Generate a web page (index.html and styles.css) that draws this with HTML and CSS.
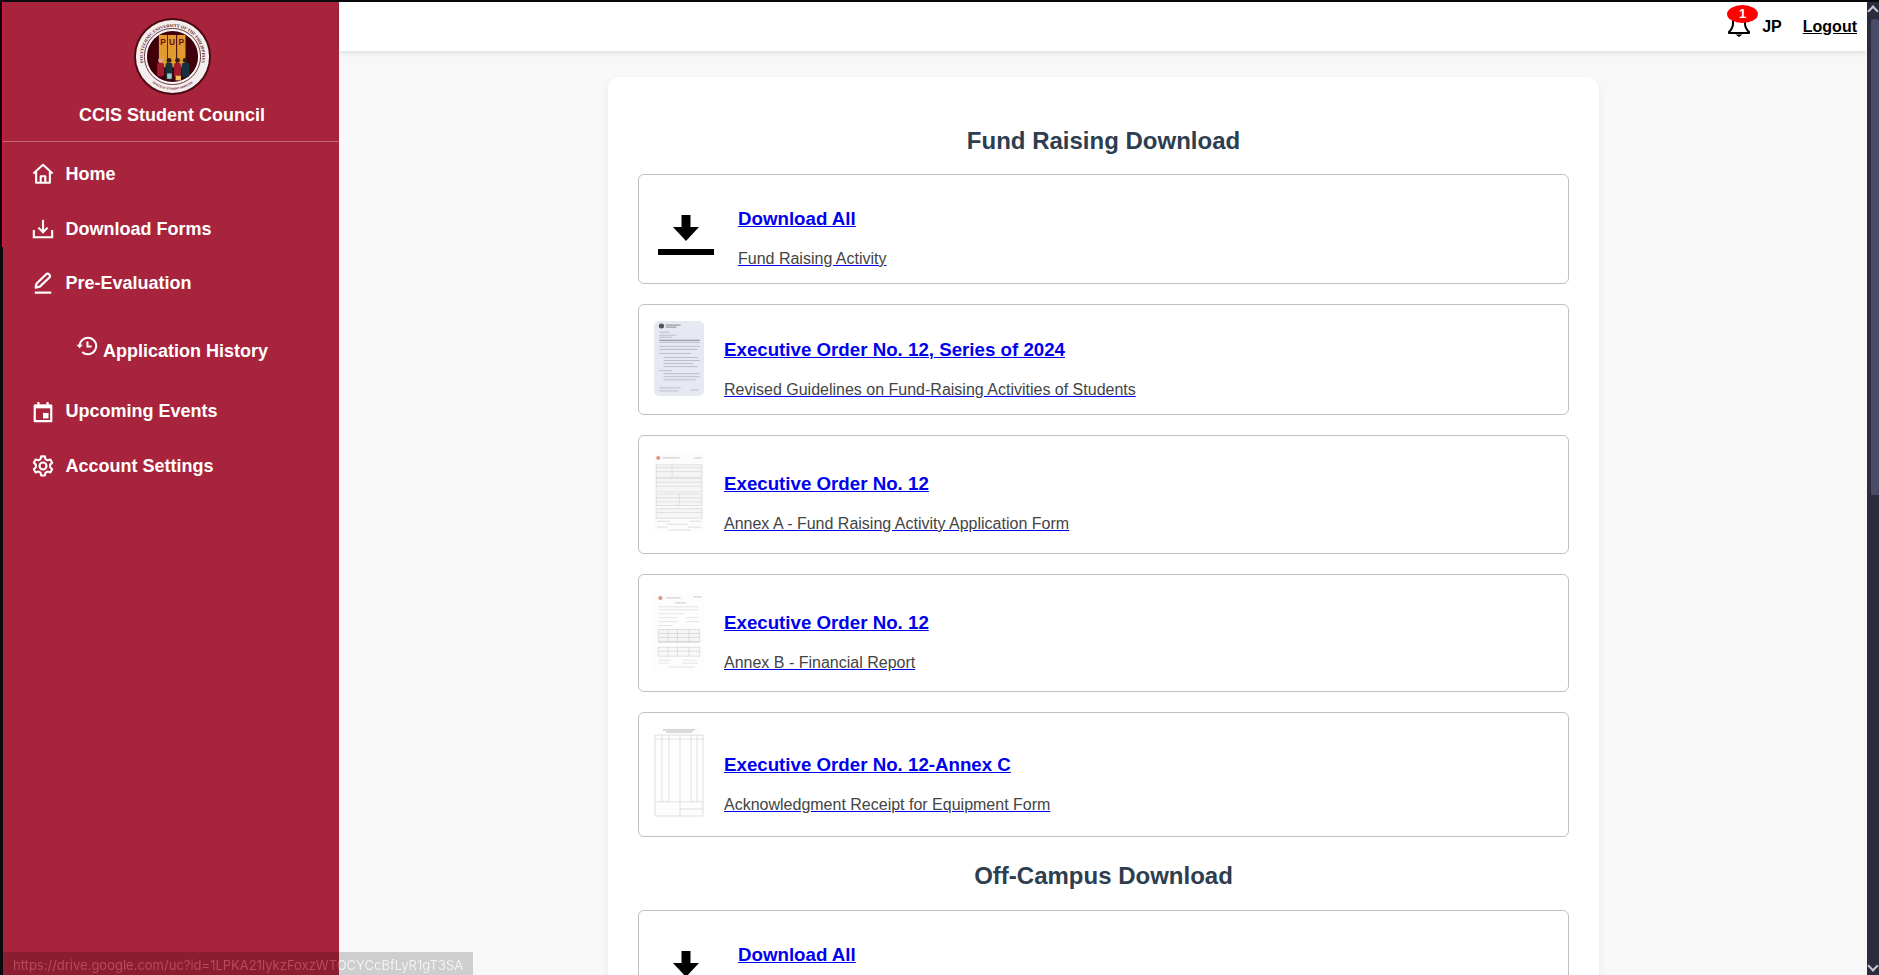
FILE: index.html
```html
<!DOCTYPE html>
<html lang="en">

<head>
    <meta charset="UTF-8">
    <meta name="viewport" content="width=device-width, initial-scale=1.0">
    <title>CCIS Student Council - Downloads</title>
    <link rel="stylesheet" href="styles.css">
</head>

<body>
    <div class="top-edge"></div>
    <div class="app">
        <div class="left-edge"></div>

        <aside class="sidebar">
            <div class="brand">
                <svg class="logo" viewBox="0 0 100 100">
                    <defs>
                        <path id="ringTop" d="M18.400 72 A38.500 38.500 0 1 1 81.600 72"></path>
                        <path id="ringBottom" d="M21.200 82 A43 43 0 0 0 78.800 82"></path>
                    </defs>
                    <circle cx="50" cy="50" r="50" fill="#4d0712"></circle>
                    <circle cx="50" cy="50" r="47.500" fill="#f4efee"></circle>
                    <circle cx="50" cy="50" r="34" fill="#3f000c" stroke="#fff" stroke-width="1.500"></circle>
                    <circle cx="50" cy="50" r="36.500" fill="none" stroke="#4d0712" stroke-width="1"></circle>
                    <text class="logo-ring"><textPath href="#ringTop" startOffset="50%" text-anchor="middle">POLYTECHNIC UNIVERSITY OF THE PHILIPPINES</textPath></text>
                    <text class="logo-ring-small"><textPath href="#ringBottom" startOffset="50%" text-anchor="middle">OFFICE OF STUDENT SERVICES</textPath></text>
                    <rect x="32.300" y="22" width="10.700" height="42" fill="#e09a30"></rect>
                    <rect x="44" y="22" width="10.700" height="42" fill="#e09a30"></rect>
                    <rect x="56" y="22" width="10.900" height="42" fill="#e09a30"></rect>
                    <text class="logo-pup" x="37.600" y="35">P</text>
                    <text class="logo-pup" x="49.400" y="35">U</text>
                    <text class="logo-pup" x="61.400" y="35">P</text>
                    <g>
                        <rect x="30" y="58" width="9" height="18" rx="3" fill="#a01c2c"></rect>
                        <circle cx="34.500" cy="55" r="3.200" fill="#d7a486"></circle>
                        <rect x="41" y="58" width="9" height="22" rx="3" fill="#16323c"></rect>
                        <circle cx="45.500" cy="55" r="3.200" fill="#2b1b16"></circle>
                        <rect x="52" y="58" width="9" height="19" rx="3" fill="#a01c2c"></rect>
                        <circle cx="56.500" cy="55" r="3.200" fill="#3a2018"></circle>
                        <rect x="62" y="58" width="10" height="19" rx="3" fill="#15303f"></rect>
                        <circle cx="66.500" cy="55" r="3.200" fill="#2b1b16"></circle>
                        <rect x="43" y="72" width="6" height="7" fill="#9fc5c9"></rect>
                        <rect x="54" y="75" width="7" height="6" fill="#f0c060"></rect>
                    </g>
                </svg>
                <div class="brand-name">CCIS Student Council</div>
            </div>

            <nav class="menu">
                <a class="menu-item" href="#">
                    <svg class="menu-icon" viewBox="0 0 24 24" fill="none" stroke="#fff" stroke-width="2.300" stroke-linejoin="round">
                        <path d="M1.500 11.500 12 2l10.500 9.500"></path>
                        <path d="M4.500 9.500V21.500h15V9.500"></path>
                        <path d="M9.500 21.500v-7h5v7"></path>
                    </svg>
                    Home
                </a>
                <a class="menu-item item-forms" href="#">
                    <svg class="menu-icon" viewBox="0 0 24 24" fill="none" stroke="#fff" stroke-width="2.300">
                        <path d="M12 2v13"></path>
                        <path d="M7 10.500l5 5 5-5"></path>
                        <path d="M2 13v8h20v-8"></path>
                    </svg>
                    Download Forms
                </a>
                <a class="menu-item" href="#">
                    <svg class="menu-icon" viewBox="0 0 24 24" fill="none" stroke="#fff" stroke-width="2.400" stroke-linejoin="round">
                        <path d="M4 17l1-4.500L15.500 2.500a2 2 0 0 1 3 0l.5.500a2 2 0 0 1 0 3L8.500 16z"></path>
                        <path d="M3 22.500h18" stroke-width="2.400"></path>
                    </svg>
                    Pre-Evaluation
                </a>
                <a class="menu-item item-history" href="#">
                    <svg class="history-icon" viewBox="0 0 24 24" fill="none" stroke="#fff" stroke-width="2.200">
                        <path d="M4 12a9 9 0 1 1 2.800 6.500"></path>
                        <path d="M.500 10.500h7L4 14.500z" fill="#fff" stroke="none"></path>
                        <path d="M12.500 7v5.500H17"></path>
                    </svg>
                    <span>Application History</span>
                </a>
                <a class="menu-item" href="#">
                    <svg class="menu-icon" viewBox="0 0 24 24" fill="none" stroke="#fff" stroke-width="2.400">
                        <path d="M3 5h18v17H3z" stroke-linejoin="round"></path>
                        <path d="M3 6h18" stroke-width="4"></path>
                        <path d="M7 1v4M17 1v4"></path>
                        <rect x="12" y="13" width="6" height="6" fill="#fff" stroke="none"></rect>
                    </svg>
                    Upcoming Events
                </a>
                <a class="menu-item" href="#">
                    <svg class="menu-icon" viewBox="0 0 24 24" fill="none" stroke="#fff" stroke-width="2.300" stroke-linejoin="round">
                        <path d="M10 1.500h4l.7 3 2.300 1.300 3-.9 2 3.500-2.200 2.100v2.900l2.200 2.100-2 3.500-3-.9-2.300 1.300-.7 3h-4l-.7-3L7 18.100l-3 .9-2-3.500 2.200-2.100v-2.900L2 8.400l2-3.500 3 .9 2.300-1.300z"></path>
                        <circle cx="12" cy="12" r="3.800"></circle>
                    </svg>
                    Account Settings
                </a>
            </nav>
        </aside>

        <div class="main">
            <header class="topbar">
                <div class="bell">
                    <svg class="bell-icon" viewBox="0 0 24 21" fill="none" stroke="#000" stroke-width="2" stroke-linejoin="round">
                        <path d="M6 0v8c0 4-1.500 5.500-4 8v1h20v-1c-2.500-2.500-4-4-4-8V0"></path>
                        <path d="M8.500 18.500h7L12 21z" fill="#000" stroke="none"></path>
                    </svg>
                    <span class="badge">1</span>
                </div>
                <span class="user">JP</span>
                <a class="logout" href="#">Logout</a>
            </header>

            <div class="content">
                <section class="card">
                    <h2 class="section-title">Fund Raising Download</h2>

                    <div class="doc doc-all">
                        <svg class="all-icon" viewBox="0 0 56 40">
                            <path d="M23.500 0h9v12H41L28 26 15 12h8.500z"></path>
                            <rect x="0" y="34" width="56" height="6"></rect>
                        </svg>
                        <a class="doc-text" href="#">
                            <span class="doc-title">Download All</span>
                            <span class="doc-sub">Fund Raising Activity</span>
                        </a>
                    </div>

                    <div class="doc doc-eo">
                        <svg class="thumb thumb-blue" viewBox="0 0 47 74" preserveAspectRatio="none">
                            <rect width="47" height="74" rx="5" fill="#e6e9f2"></rect>
                            <circle cx="7" cy="5" r="2.500" fill="#555"></circle>
                            <path d="M11 4h14M11 6h10M5 19h38" stroke="#777" stroke-width=".8"></path>
                            <path d="M5 11h10M5 14h16M5 16h12M5 21h38M5 25h38M5 28h36M5 32h30M9 36h32M9 39h34M9 42h28M9 45h32M5 49h12M9 52h34M9 55h34M9 58h30M5 66h20M5 69h18M34 68h8" stroke="#a9adbc" stroke-width=".7"></path>
                        </svg>
                        <a class="doc-text" href="#">
                            <span class="doc-title">Executive Order No. 12, Series of 2024</span>
                            <span class="doc-sub">Revised Guidelines on Fund-Raising Activities of Students</span>
                        </a>
                    </div>

                    <div class="doc doc-annex-a">
                        <svg class="thumb thumb-a" viewBox="0 0 47 80" preserveAspectRatio="none">
                            <rect width="47" height="80" fill="#fcfcfc"></rect>
                            <circle cx="4" cy="4" r="2" fill="#d89a80"></circle>
                            <path d="M8 4h16M38 4h7" stroke="#bbb" stroke-width=".8"></path>
                            <path d="M2 11h43v13H2zM2 25h43v14H2zM2 41h43v12H2zM2 56h43v10H2z" fill="#f5f5f5" stroke="#bbb" stroke-width=".4"></path>
                            <path d="M2 14h43M2 18h43M2 29h43M2 33h43M2 45h43M2 49h43M2 60h43M17 11v13M24 41v12" stroke="#c4c4c4" stroke-width=".4"></path>
                            <path d="M3 69h12M33 69h11M12 72h20M3 75h10M32 75h12M14 78h20" stroke="#ccc" stroke-width=".6"></path>
                        </svg>
                        <a class="doc-text" href="#">
                            <span class="doc-title">Executive Order No. 12</span>
                            <span class="doc-sub">Annex A - Fund Raising Activity Application Form</span>
                        </a>
                    </div>

                    <div class="doc doc-annex-b">
                        <svg class="thumb thumb-b" viewBox="0 0 47 79" preserveAspectRatio="none">
                            <rect width="47" height="79" fill="#fdfdfd"></rect>
                            <circle cx="6" cy="5" r="2" fill="#d89a80"></circle>
                            <path d="M11 5h14M37 4h8M20 10h10" stroke="#bbb" stroke-width=".8"></path>
                            <path d="M4 14h38M4 17h38M4 21h24M4 25h18M30 25h12M4 29h18M30 29h12M4 33h14" stroke="#ccc" stroke-width=".5"></path>
                            <path d="M4 37h39v13H4zM4 49h39M13 37v13M22 37v13M33 37v13M4 41h39M4 45h39" fill="#f6f6f6" stroke="#bbb" stroke-width=".4"></path>
                            <path d="M4 55h39v9H4zM4 59h39M13 55v9M22 55v9M33 55v9" fill="#f9f9f9" stroke="#bbb" stroke-width=".4"></path>
                            <path d="M4 68h12M27 68h12M4 71h10M27 71h14M14 75h24" stroke="#ccc" stroke-width=".5"></path>
                        </svg>
                        <a class="doc-text" href="#">
                            <span class="doc-title">Executive Order No. 12</span>
                            <span class="doc-sub">Annex B - Financial Report</span>
                        </a>
                    </div>

                    <div class="doc doc-annex-c">
                        <svg class="thumb thumb-c" viewBox="0 0 50 89" preserveAspectRatio="none">
                            <rect width="50" height="89" rx="4" fill="#fdfdfd"></rect>
                            <path d="M9 2h32M12 4h26" stroke="#999" stroke-width=".7"></path>
                            <path d="M1 7v80M49 7v80M1 7h48M1 11h48M1 73h48M1 87h48M8 7v66M15 7v66M26 7v80M37 7v66M43 7v66M26 80h23" stroke="#c4c4c4" stroke-width=".5" fill="none"></path>
                        </svg>
                        <a class="doc-text" href="#">
                            <span class="doc-title">Executive Order No. 12-Annex C</span>
                            <span class="doc-sub">Acknowledgment Receipt for Equipment Form</span>
                        </a>
                    </div>

                    <h2 class="section-title section-next">Off-Campus Download</h2>

                    <div class="doc doc-all">
                        <svg class="all-icon" viewBox="0 0 56 40">
                            <path d="M23.500 0h9v12H41L28 26 15 12h8.500z"></path>
                            <rect x="0" y="34" width="56" height="6"></rect>
                        </svg>
                        <a class="doc-text" href="#">
                            <span class="doc-title">Download All</span>
                            <span class="doc-sub">Off-Campus Activity</span>
                        </a>
                    </div>
                </section>
            </div>
        </div>

        <div class="scrollbar">
            <span class="arrow arrow-up"></span>
            <div class="scroll-track"><div class="scroll-thumb"></div></div>
            <span class="arrow arrow-down"></span>
        </div>
    </div>

    <div class="status-link"><span>https://drive.google.com/uc?id=1LPKA21lykzFoxzWTOCYCcBfLyR1gT3SA</span></div>
</body>

</html>
```
FILE: styles.css
```css
* {
    box-sizing: border-box;
}

html,
body {
    height: 100%;
    margin: 0;
    overflow: hidden;
}

body {
    display: flex;
    flex-direction: column;
    font-family: "Liberation Sans", Arial, sans-serif;
    background-color: #f8f8f8;
}

.top-edge {
    height: 2px;
    flex: none;
    background-color: #0a0a0c;
}

.app {
    flex: 1;
    display: flex;
    min-height: 0;
}

.left-edge {
    width: 3px;
    flex: none;
    background: linear-gradient(#d81a40, #d81a40) right top / 1px 245px no-repeat, #0a0a0c;
}

/* sidebar */
.sidebar {
    width: 336px;
    flex: none;
    background-color: #a8243c;
    color: white;
}

.brand {
    height: 140px;
    border-bottom: 1px solid #c9677a;
    display: flex;
    flex-direction: column;
    align-items: center;
    padding: 16px 0 0 2px;
}

.logo {
    width: 77px;
    height: 77px;
}

.logo-ring {
    font: bold 5.600px "Liberation Serif", serif;
    fill: #5a1020;
}

.logo-ring-small {
    font: bold 3.600px "Liberation Sans", sans-serif;
    fill: #5a1020;
}

.logo-pup {
    font: bold 11px "Liberation Sans", sans-serif;
    fill: #6b0f14;
    text-anchor: middle;
}

.brand-name {
    margin-top: 9px;
    font-size: 18px;
    font-weight: bold;
    line-height: 22px;
}

.menu {
    display: flex;
    flex-direction: column;
    padding-top: 5px;
}

.menu-item {
    height: 54.500px;
    display: flex;
    align-items: center;
    gap: 12px;
    padding-left: 28.500px;
    font-size: 18px;
    font-weight: bold;
    color: white;
    text-decoration: none;
}

.item-forms {
    padding-top: 1px;
}

.menu-icon {
    width: 22px;
    height: 22px;
    flex: none;
}

.item-history {
    height: 74px;
    padding-left: 73px;
    gap: 5px;
    padding-top: 6px;
}

.item-history span {
    margin-top: 1px;
}

.history-icon {
    width: 22px;
    height: 22px;
    margin-top: -10px;
}

/* top bar */
.main {
    flex: 1;
    min-width: 0;
    display: flex;
    flex-direction: column;
}

.topbar {
    height: 49px;
    flex: none;
    display: flex;
    align-items: center;
    justify-content: flex-end;
    padding-right: 10px;
    background-color: white;
    box-shadow: 0 2px 5px rgba(0, 0, 0, .1);
    font-size: 16px;
    font-weight: bold;
    color: black;
    position: relative;
}

.bell {
    position: relative;
    width: 24px;
    height: 21px;
}

.bell-icon {
    display: block;
    width: 24px;
    height: 21px;
}

.badge {
    position: absolute;
    left: 0;
    top: -11px;
    width: 31px;
    height: 18px;
    border-radius: 50%;
    background-color: red;
    color: white;
    font-size: 13px;
    font-weight: bold;
    line-height: 18px;
    text-align: center;
}

.user {
    margin-left: 11px;
}

.logout {
    margin-left: 21px;
    color: black;
}

/* card + rows */
.content {
    flex: 1;
    min-height: 0;
    overflow: hidden;
    padding-top: 26px;
    display: flex;
    justify-content: center;
}

.card {
    width: 991px;
    height: fit-content;
    background-color: white;
    border-radius: 12px;
    box-shadow: 0 4px 10px rgba(0, 0, 0, .06);
    padding: 30px 30px 40px;
    margin-bottom: 40px;
}

.section-title {
    margin: 20px 0;
    height: 27px;
    padding-left: 1px;
    font-size: 24px;
    line-height: 27px;
    font-weight: bold;
    color: #2c3e50;
    text-align: center;
}

.section-next {
    margin: 25px 0 21px;
}

.doc {
    display: flex;
    align-items: center;
    width: 931px;
    height: 110px;
    margin: 0 0 20px;
    padding: 0 16px 0 15.500px;
    border: 1px solid #bcc2c7;
    border-radius: 6px;
    background-color: white;
}

.doc-eo {
    height: 111px;
}

.doc-annex-a {
    height: 119px;
}

.doc-annex-a .doc-text {
    margin-top: 16px;
}

.doc-annex-b {
    height: 118px;
}

.doc-annex-c {
    height: 125px;
}

.all-icon {
    width: 56px;
    height: 40px;
    margin-left: 4px;
    margin-top: 12px;
    margin-right: 24px;
    fill: black;
    flex: none;
}

.thumb {
    flex: none;
    width: 50px;
    margin-top: -3px;
    margin-right: 20px;
}

.thumb-blue {
    height: 75px;
}

.thumb-a {
    height: 78px;
}

.thumb-b {
    height: 78px;
}

.thumb-c {
    height: 90px;
}

.doc-text {
    display: flex;
    flex-direction: column;
    gap: 20px;
    margin-top: 18px;
    color: #0000ee;
}

.doc-title {
    font-size: 18.720px;
    line-height: 22px;
    font-weight: bold;
    color: #0000ee;
}

.doc-sub {
    font-size: 16px;
    line-height: 18px;
    color: #444;
}

/* fake window scrollbar */
.scrollbar {
    width: 12px;
    flex: none;
    display: flex;
    flex-direction: column;
    background-color: #2b2d3e;
}

.scroll-track {
    flex: 1;
    padding-top: 3px;
}

.scroll-thumb {
    width: 8px;
    margin-left: 4px;
    height: 476px;
    border-radius: 3px 3px 0 0;
    background-color: #4a4b66;
}

.arrow {
    height: 14px;
    flex: none;
    display: flex;
    justify-content: center;
    align-items: center;
}

.arrow::before {
    content: "";
    width: 6px;
    height: 6px;
    border-left: 2px solid #c8c8d0;
    border-top: 2px solid #c8c8d0;
    transform: translateY(2px) rotate(45deg);
}

.arrow-down::before {
    transform: translateY(-2px) rotate(225deg);
}

/* browser link preview, lies over the page */
.status-link {
    position: absolute;
    left: 3px;
    bottom: 0;
    height: 23px;
    width: 470px;
    padding-left: 10px;
    font-family: Inter, "Liberation Sans", sans-serif;
    font-size: 13px;
    line-height: 27px;
    white-space: nowrap;
    background-color: rgba(0, 0, 0, .17);
}

.status-link span {
    color: transparent;
    background: linear-gradient(90deg, #bb4a5c 326px, #f4f4f4 326px);
    -webkit-background-clip: text;
    background-clip: text;
}
```
